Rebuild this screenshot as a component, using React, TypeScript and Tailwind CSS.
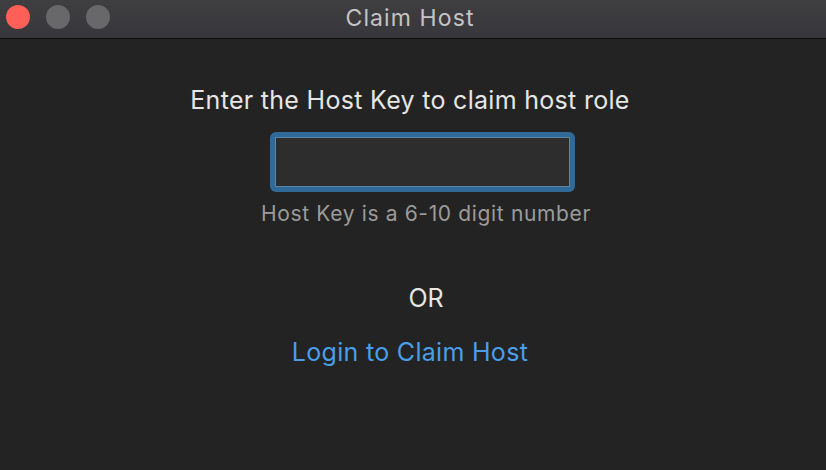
import React from 'react';

const App = () => {
  return (
    <div className="flex flex-col w-[826px] h-[470px] bg-[#232323] overflow-hidden" style={{ fontFamily: 'Inter, "Noto Sans", sans-serif' }}>
      {/* Title bar */}
      <header className="relative flex items-center justify-center h-[39px] bg-gradient-to-b from-[#3f3e41] to-[#37363a] border-b border-[#0e0e0e]">
        <div className="absolute left-[6px] top-[5px] flex gap-[16px]">
          <span className="w-[24px] h-[24px] rounded-full bg-[#fe5f57]" />
          <span className="w-[24px] h-[24px] rounded-full bg-[#68676a]" />
          <span className="w-[24px] h-[24px] rounded-full bg-[#68676a]" />
        </div>
        <h1 className="mr-[6px] -mt-[2px] text-[23px] leading-[30px] tracking-[1.1px] text-[#c4c3c5]">Claim Host</h1>
      </header>

      {/* Main Content */}
      <main className="flex flex-col items-center pt-[46px]">
        <h2 className="mr-[6px] text-[25px] leading-[30px] tracking-[0.3px] text-[#e6e6e6]">Enter the Host Key to claim host role</h2>

        <div className="ml-[18px] mt-[17px] w-[305px] h-[60px] rounded-[6px] bg-[#2f6a99] p-[5px]">
          <input
            type="text"
            className="w-full h-full bg-[#2d2d2d] border border-[#5b85a8] outline-none text-[#e6e6e6] px-2 text-[20px]"
          />
        </div>
        <p className="ml-[26px] mt-[9px] text-[21px] leading-[26px] tracking-[0.65px] text-[#9b9b9b]">Host Key is a 6-10 digit number</p>

        <p className="ml-[26px] mt-[56px] text-[25px] leading-[30px] text-[#e6e6e6]">OR</p>

        <a href="#" className="mr-[6px] mt-[24px] text-[25px] leading-[30px] tracking-[0.3px] text-[#4a9ee8]">Login to Claim Host</a>
      </main>
    </div>
  );
};

export default App;
